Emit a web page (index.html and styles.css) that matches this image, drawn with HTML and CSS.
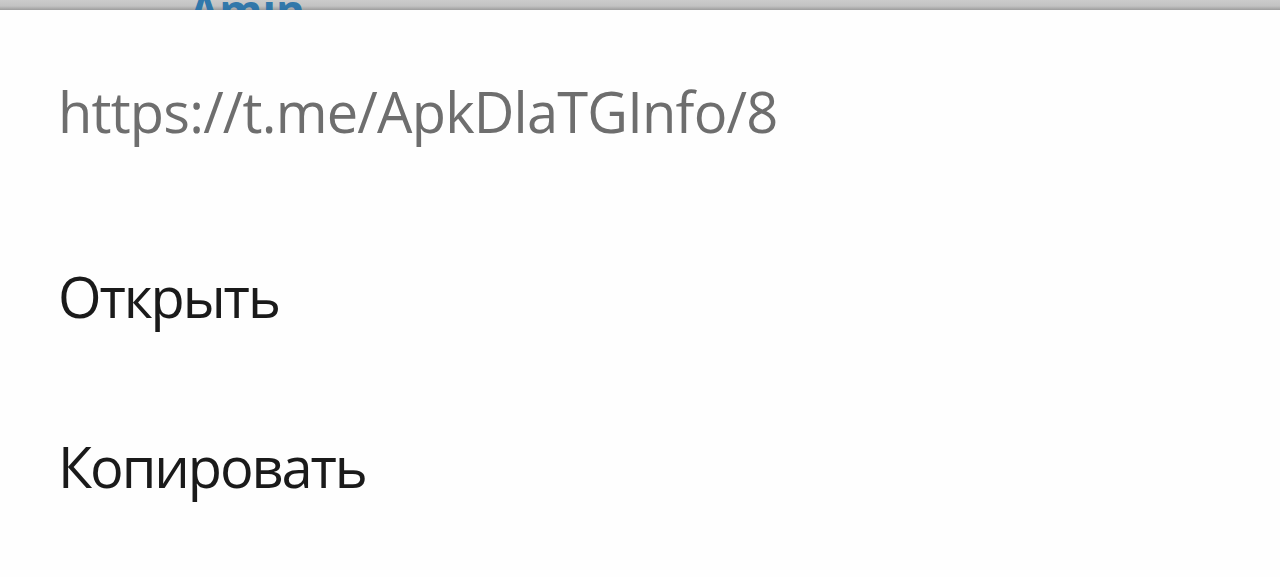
FILE: index.html
```html
<!DOCTYPE html>
<html lang="en">
<head>
    <meta charset="UTF-8">
    <meta name="viewport" content="width=device-width, initial-scale=1.0">
    <title>Link menu</title>
    <link rel="stylesheet" href="styles.css">
</head>
<body>
    <div class="backdrop">
        <span class="behind">Amin</span>
    </div>
    <div class="sheet">
        <div class="title">https://t.me/ApkDlaTGInfo/8</div>
        <div class="item">Открыть</div>
        <div class="item">Копировать</div>
    </div>
</body>
</html>
```

FILE: styles.css
```css
*{
    padding: 0;
    margin: 0;
    box-sizing: border-box;
}
body{
    background: #fefefe;
    height: 100vh;
    overflow: hidden;
    font-family: "Open Sans", "Noto Sans", sans-serif;
}
.backdrop{
    height: 10px;
    overflow: hidden;
    background: linear-gradient(to bottom, #cbcbcb 0%, #c2c2c2 60%, #9c9c9c 100%);
    padding-left: 189px;
}
.behind{
    display: block;
    margin-top: -12px;
    font-size: 44px;
    font-weight: 700;
    line-height: 1;
    color: #2270a8;
    opacity: 0.9;
}
.sheet{
    background: #fefefe;
    padding-left: 58px;
}
.title{
    height: 258px;
    padding-top: 73px;
    font-size: 56px;
    line-height: 1;
    color: #6e6e6e;
    letter-spacing: -0.8px;
}
.item{
    height: 170px;
    font-size: 56px;
    line-height: 1;
    color: #1a1a1a;
    letter-spacing: -2.1px;
}
.item:last-child{
    height: 139px;
}
```
